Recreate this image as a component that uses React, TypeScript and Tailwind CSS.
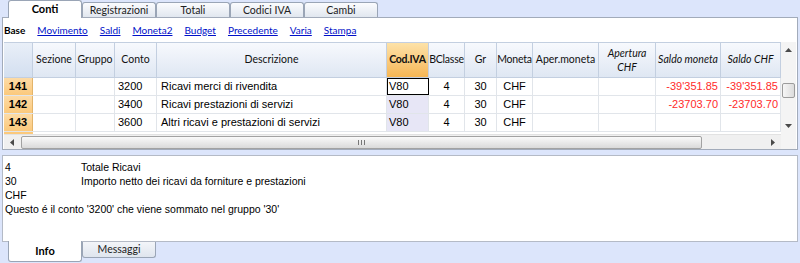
import React from "react";

const headers: { cls: string; label: React.ReactNode; extra?: string }[] = [
  { cls: "w-[29px]", label: "", extra: "bg-linear-to-b from-[#e9eff8] to-[#d3dff0]" },
  { cls: "w-[43px]", label: "Sezione" },
  { cls: "w-[39px]", label: "Gruppo" },
  { cls: "w-[42px]", label: "Conto" },
  { cls: "w-[230px]", label: "Descrizione" },
  { cls: "w-[42px]", label: "Cod.IVA", extra: "font-bold tracking-[-0.3px] bg-linear-to-b from-[#fde2a8] to-[#f6b653]" },
  { cls: "w-[36px]", label: "BClasse", extra: "tracking-[-0.2px]" },
  { cls: "w-[32px]", label: "Gr" },
  { cls: "w-[36px]", label: "Moneta", extra: "tracking-[-0.2px]" },
  { cls: "w-[66px]", label: "Aper.moneta" },
  { cls: "w-[57px]", label: <span className="italic leading-[14px]">Apertura<br />CHF</span> },
  { cls: "w-[65px]", label: <span className="italic">Saldo moneta</span> },
  { cls: "w-[60px]", label: <span className="italic">Saldo CHF</span> },
];

const rows = [
  ["141", "", "", "3200", "Ricavi merci di rivendita", "V80", "4", "30", "CHF", "", "", "-39'351.85", "-39'351.85"],
  ["142", "", "", "3400", "Ricavi prestazioni di servizi", "V80", "4", "30", "CHF", "", "", "-23703.70", "-23703.70"],
  ["143", "", "", "3600", "Altri ricavi e prestazioni di servizi", "V80", "4", "30", "CHF", "", "", "", ""],
];

const cellCls = [
  "w-[29px] justify-center font-bold bg-linear-to-b from-[#fddba6] to-[#fbc97c] border-r border-[#e3b46a]",
  "w-[43px]",
  "w-[39px]",
  "w-[42px] justify-start pl-[3px]",
  "w-[230px] justify-start pl-[4px]",
  "w-[42px] justify-start pl-[2px] bg-[#e7e6f6]",
  "w-[36px] justify-center",
  "w-[32px] justify-center",
  "w-[36px] justify-center",
  "w-[66px]",
  "w-[57px]",
  "w-[65px] justify-end pr-[2px] text-[#ff2a2a]",
  "w-[60px] justify-end pr-[2px] text-[#ff2a2a]",
];

function Tab({ label, active }: { label: string; active?: boolean }) {
  return active ? (
    <div className="relative z-10 w-[74px] h-[18px] bg-white border border-b-0 border-[#9aa5b6] rounded-t-[3px] flex items-center justify-center font-bold text-[11px] text-black">
      {label}
    </div>
  ) : (
    <div className="w-[74px] h-[16px] bg-linear-to-b from-[#fbfcfe] to-[#dfe5ee] border border-b-0 border-[#9aa5b6] rounded-t-[3px] flex items-center justify-center text-[10.5px] text-[#222]">
      {label}
    </div>
  );
}

function Arrow({ dir }: { dir: "up" | "down" | "left" | "right" }) {
  const pts =
    dir === "up" ? "0,4 3.5,0 7,4" : dir === "down" ? "0,0 3.5,4 7,0" : dir === "left" ? "4,0 0,3.5 4,7" : "0,0 4,3.5 0,7";
  const w = dir === "up" || dir === "down" ? 7 : 4;
  const h = dir === "up" || dir === "down" ? 4 : 7;
  return (
    <svg width={w} height={h} viewBox={`0 0 ${w} ${h}`}>
      <polygon points={pts} fill="#4a4a4a" />
    </svg>
  );
}

export default function App() {
  return (
    <div className="w-[800px] h-[263px] bg-[#dce5fb] flex flex-col font-['Lato',sans-serif] text-black overflow-hidden">
      {/* top tabs */}
      <div className="h-[18px] flex items-end pl-[8px]">
        <Tab label="Conti" active />
        <Tab label="Registrazioni" />
        <Tab label="Totali" />
        <Tab label="Codici IVA" />
        <Tab label="Cambi" />
      </div>

      {/* main panel */}
      <div className="-mt-px ml-[2px] w-[796px] h-[133px] bg-white border border-[#a2abba] flex flex-col">
        <div className="h-[24px] flex items-center pl-[1px] gap-[12px] text-[10px]">
          <span className="font-bold">Base</span>
          {["Movimento", "Saldi", "Moneta2", "Budget", "Precedente", "Varia", "Stampa"].map((l) => (
            <span key={l} className="text-[#0010c8] underline">
              {l}
            </span>
          ))}
        </div>

        <div className="pl-[1px] flex flex-col">
          <div className="h-[92px] flex">
            {/* table */}
            <div className="w-[777px] flex flex-col overflow-hidden">
              <div className="h-[36px] flex border-t border-b border-[#c3cfe0] bg-linear-to-b from-[#f7f9fd] to-[#dfe7f3]">
                {headers.map((h, i) => (
                  <div
                    key={i}
                    className={`${h.cls} ${h.extra ?? ""} shrink-0 h-full flex items-center justify-center text-center border-r border-[#c3cfe0] text-[10.5px] text-[#111] whitespace-nowrap overflow-hidden`}
                  >
                    {h.label}
                  </div>
                ))}
              </div>
              {rows.map((r, ri) => (
                <div key={ri} className="h-[18px] flex border-b border-[#e1e5ea] font-['Liberation_Sans',sans-serif] text-[11px]">
                  {r.map((c, ci) => (
                    <div
                      key={ci}
                      className={`${cellCls[ci]} shrink-0 h-full flex items-center ${ci > 0 ? "border-r border-[#e1e5ea]" : ""} ${
                        ri === 0 && ci === 5 ? "!bg-white outline outline-1 outline-black -outline-offset-1" : ""
                      }`}
                    >
                      {c}
                    </div>
                  ))}
                </div>
              ))}
              <div className="h-[2px] flex">
                <div className="w-[29px] bg-[#fbc97c]" />
              </div>
            </div>
            {/* vertical scrollbar */}
            <div className="w-[15px] bg-[#f4f4f4] flex flex-col items-center">
              <div className="h-[16px] flex items-center justify-center">
                <Arrow dir="up" />
              </div>
              <div className="flex-1 w-full flex flex-col items-center pt-[25px]">
                <div className="w-[13px] h-[15px] rounded-[2px] border border-[#9c9c9c] bg-linear-to-r from-[#f6f6f6] to-[#dcdcdc]" />
              </div>
              <div className="h-[16px] flex items-center justify-center">
                <Arrow dir="down" />
              </div>
            </div>
          </div>
          {/* horizontal scrollbar */}
          <div className="h-[15px] flex">
            <div className="w-[777px] bg-[#f0f0f0] border-t border-[#e2e2e2] flex items-center">
              <div className="w-[16px] flex items-center justify-center">
                <Arrow dir="left" />
              </div>
              <div className="ml-[1px] w-[681px] h-[13px] rounded-[2px] border border-[#a2a2a2] bg-linear-to-b from-[#fafafa] to-[#dadada] flex items-center justify-center gap-[2px]">
                <div className="w-px h-[5px] bg-[#777]" />
                <div className="w-px h-[5px] bg-[#777]" />
                <div className="w-px h-[5px] bg-[#777]" />
              </div>
              <div className="flex-1" />
              <div className="w-[16px] flex items-center justify-center">
                <Arrow dir="right" />
              </div>
            </div>
            <div className="w-[15px] bg-[#f4f4f4]" />
          </div>
        </div>
      </div>

      {/* info panel */}
      <div className="mt-[5px] ml-[2px] w-[796px] h-[87px] bg-white border border-[#b4bac6] pt-[4px] pl-[2px] font-['Liberation_Sans',sans-serif] text-[10.5px] leading-[14px] text-black">
        <div className="flex">
          <span className="w-[76px]">4</span>
          <span>Totale Ricavi</span>
        </div>
        <div className="flex">
          <span className="w-[76px]">30</span>
          <span>Importo netto dei ricavi da forniture e prestazioni</span>
        </div>
        <div>CHF</div>
        <div>Questo é il conto '3200' che viene sommato nel gruppo '30'</div>
      </div>

      {/* bottom tabs */}
      <div className="-mt-px flex items-start pl-[8px]">
        <div className="relative z-10 w-[74px] h-[21px] bg-white border border-t-0 border-[#9aa5b6] rounded-b-[3px] flex items-center justify-center font-bold text-[11px]">
          Info
        </div>
        <div className="w-[74px] h-[16px] mt-px bg-linear-to-b from-[#f3f5f9] to-[#dfe5ee] border border-t-0 border-[#9aa5b6] rounded-b-[3px] flex items-center justify-center text-[10.5px] text-[#222]">
          Messaggi
        </div>
      </div>
    </div>
  );
}
